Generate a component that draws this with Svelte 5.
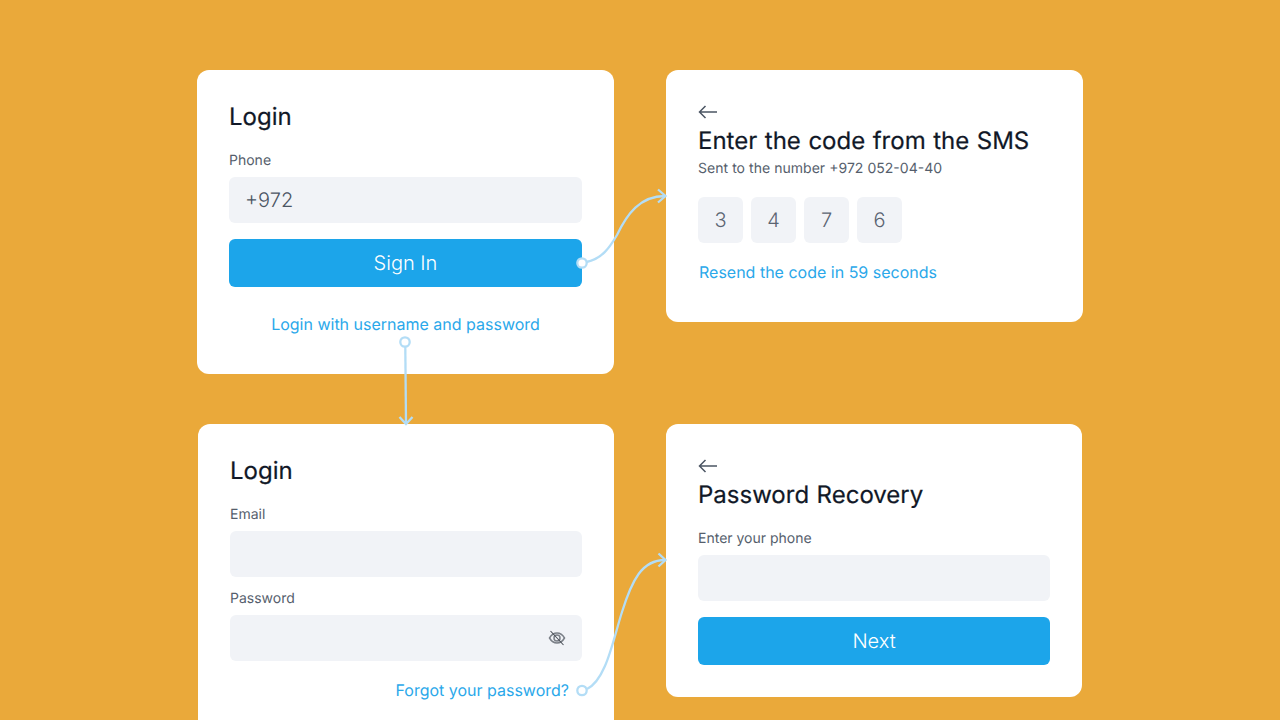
<script>
  const digits = ['3', '4', '7', '6'];
</script>

<main class="stage">
  <section class="card c1">
    <h2>Login</h2>
    <div class="label">Phone</div>
    <div class="field phone">+972</div>
    <div class="btn">Sign In</div>
    <div class="link center">Login with username and password</div>
  </section>

  <section class="card c2">
    <svg class="back" width="20" height="14" viewBox="0 0 20 14" fill="none" stroke="#4b5563" stroke-width="1.5">
      <path d="M19 7H1.500M7.500 1 1.500 7l6 6" />
    </svg>
    <h2>Enter the code from the SMS</h2>
    <div class="sub">Sent to the number +972 052-04-40</div>
    <div class="codes">
      {#each digits as d}
        <div class="code">{d}</div>
      {/each}
    </div>
    <div class="link resend">Resend the code in 59 seconds</div>
  </section>

  <section class="card c3">
    <h2>Login</h2>
    <div class="label">Email</div>
    <div class="field"></div>
    <div class="label second">Password</div>
    <div class="field pass">
      <svg width="18" height="18" viewBox="0 0 18 18" fill="none" stroke="#7a7f87" stroke-width="1.500">
        <path d="M1.500 9C3.500 5.600 6 4 9 4s5.500 1.600 7.500 5c-2 3.400-4.500 5-7.500 5S3.500 12.400 1.500 9Z" />
        <circle cx="9" cy="9" r="3" />
        <path d="M2.500 2 15.500 16" stroke="#4b5058" stroke-width="1.100" />
      </svg>
    </div>
    <div class="link right">Forgot your password?</div>
    <div class="rest"></div>
  </section>

  <section class="card c4">
    <svg class="back" width="20" height="14" viewBox="0 0 20 14" fill="none" stroke="#4b5563" stroke-width="1.5">
      <path d="M19 7H1.500M7.500 1 1.500 7l6 6" />
    </svg>
    <h2>Password Recovery</h2>
    <div class="label enter">Enter your phone</div>
    <div class="field"></div>
    <div class="btn">Next</div>
  </section>

  <svg class="wires" width="1280" height="720" viewBox="0 0 1280 720" fill="none" stroke="#b3ddf6" stroke-width="2.300">
    <path d="M586.500 262C602 259 610 247 617 235C627 214 640 196 665 196" />
    <path d="M658 189.500 665.500 196 658 202.500" />
    <circle cx="582" cy="263" r="4.700" fill="#fff" />
    <path d="M405.300 347 406 423" />
    <path d="M399.500 417 406 424 412.500 417" />
    <circle cx="405" cy="342" r="4.700" fill="#fff" />
    <path d="M587 689C606 680 613 640 622 612C632 580 642 560 665 560" />
    <path d="M658.500 553.500 665.500 560 658.500 566.500" />
    <circle cx="582" cy="690.500" r="4.700" fill="#fff" />
  </svg>
</main>

<style>
  :global(body) {
    margin: 0;
    background: #eaa93a;
    font-family: Inter, "Liberation Sans", sans-serif;
    text-rendering: geometricPrecision;
  }
  .stage {
    position: relative;
    width: 1280px;
    height: 720px;
    overflow: hidden;
    box-sizing: border-box;
    display: grid;
    grid-template-columns: 417px 417px;
    grid-template-rows: 304px auto;
    column-gap: 52px;
    row-gap: 50px;
    padding: 70px 0 0 197px;
    align-items: start;
  }
  .card {
    background: #fff;
    border-radius: 12px;
    padding: 32px;
    box-sizing: border-box;
    display: flex;
    flex-direction: column;
    align-items: stretch;
  }
  .c1 { height: 304px; }
  .c2 { height: 252px; }
  .c3 { margin-left: 1px; }
  .c4 { height: 273px; width: 416px; }
  h2 {
    margin: 0;
    font-size: 24px;
    line-height: 28px;
    font-weight: 400;
    word-spacing: 0.8px;
    color: #111827;
    -webkit-text-stroke: 0.2px #111827;
  }
  .c1 h2, .c3 h2 { margin-top: 1px; }
  .back { display: block; margin: 3px 0 8px; flex: none; height: 14px; }
  .label {
    margin-top: 21px;
    font-size: 14px;
    line-height: 17px;
    color: #555e6c;
    margin-bottom: 8px;
  }
  .label.second { margin-top: 13px; }
  .sub {
    font-size: 14px;
    line-height: 17px;
    margin-top: 5px;
    color: #555e6c;
    word-spacing: 0.2px;
  }
  .field {
    height: 46px;
    flex: none;
    border-radius: 6px;
    background: #f1f3f7;
    display: flex;
    align-items: center;
  }
  .phone {
    padding-left: 16px;
    font-size: 20px;
    font-weight: 300;
    color: #4b5563;
  }
  .pass { justify-content: flex-end; padding-right: 16px; }
  .btn {
    margin-top: 16px;
    height: 48px;
    flex: none;
    border-radius: 6px;
    background: #1ca5ea;
    color: #fff;
    font-size: 20px;
    font-weight: 300;
    display: flex;
    align-items: center;
    justify-content: center;
  }
  .link {
    font-size: 16px;
    line-height: 19px;
    color: #2aa8ea;
  }
  .center { text-align: center; margin-top: 28px; }
  .right { text-align: right; margin-top: 20px; margin-right: 13px; }
  .rest { height: 60px; flex: none; }
  .codes {
    display: flex;
    gap: 8px;
    margin-top: 20px;
  }
  .code {
    width: 45px;
    height: 46px;
    border-radius: 6px;
    background: #f1f3f7;
    color: #5b6472;
    font-size: 20px;
    font-weight: 300;
    display: flex;
    align-items: center;
    justify-content: center;
  }
  .resend { margin-top: 20px; margin-left: 1px; }
  .wires {
    position: absolute;
    left: 0;
    top: 0;
    pointer-events: none;
  }
</style>
